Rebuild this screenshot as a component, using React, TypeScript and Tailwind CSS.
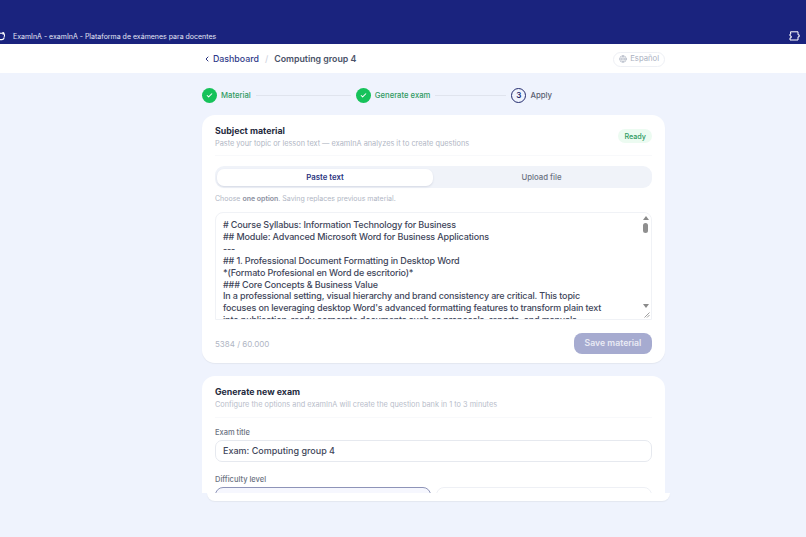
import { ChevronLeft, Check, Globe } from 'lucide-react'

const LINES = [
  '# Course Syllabus: Information Technology for Business',
  '## Module: Advanced Microsoft Word for Business Applications',
  '---',
  '## 1. Professional Document Formatting in Desktop Word',
  '*(Formato Profesional en Word de escritorio)*',
  '### Core Concepts & Business Value',
  'In a professional setting, visual hierarchy and brand consistency are critical. This topic',
  "focuses on leveraging desktop Word's advanced formatting features to transform plain text",
  'into publication-ready corporate documents such as proposals, reports, and manuals.',
]

function DoneStep({ label }: { label: string }) {
  return (
    <div className="flex items-center gap-[4px]">
      <span className="flex h-[15px] w-[15px] items-center justify-center rounded-full bg-[#16c25a]">
        <Check size={7} strokeWidth={3.5} className="text-white" />
      </span>
      <span className="pt-[1px] text-[7.7px] font-medium text-[#2f9a62]">{label}</span>
    </div>
  )
}

export default function App() {
  return (
    <div className="flex h-[537px] w-[806px] flex-col overflow-hidden bg-[#eff3fd] font-['Inter',sans-serif]">
      {/* Browser title bar */}
      <div className="flex h-[44px] items-end justify-between bg-[#1a237e] pb-[2px] text-white">
        <div className="flex items-center gap-[8px]">
          <svg width="5" height="9" viewBox="0 0 5 9" fill="none" stroke="white" strokeWidth="1.1">
            <path d="M0 1.2h2.4a2.2 2.2 0 0 1 1.6 3.6M0 7.6h2a2.4 2.4 0 0 0 2.2-2.2M2.6 0l1.4 1.2-1.4 1.2" />
          </svg>
          <span className="text-[7px] text-[#e4e6f5]">ExamInA - examInA - Plataforma de exámenes para docentes</span>
        </div>
        <svg width="11" height="10" viewBox="0 0 11 10" fill="none" stroke="white" strokeWidth="1" className="mr-[6px] mb-[1px]">
          <path d="M1.5 0.8h7.5v3h1.2v2H9V9H1V6.8h1.2V5H1V3h0.8z" />
        </svg>
      </div>

      {/* Breadcrumb */}
      <div className="flex h-[29px] bg-white pl-[202px]">
        <div className="flex w-[463px] items-center justify-between pt-[1px]">
          <div className="flex items-center text-[8.8px] font-medium">
            <ChevronLeft size={8} strokeWidth={3} className="ml-[1px] mr-[2px] text-[#2b3480]" />
            <span className="text-[#2f3a8a]">Dashboard</span>
            <span className="mx-[6px] text-[#cfd4e0]">/</span>
            <span className="font-semibold text-[#4a5268]">Computing group 4</span>
          </div>
          <div className="flex h-[15px] items-center gap-[3px] rounded-full border border-[#eef0f5] px-[5px] text-[7.7px] text-[#a9b0bf]">
            <Globe size={8} />
            Español
          </div>
        </div>
      </div>

      <div className="flex flex-1 flex-col pl-[202px]">
        {/* Stepper */}
        <div className="flex h-[42px] w-[463px] items-center pt-[2px]">
          <DoneStep label="Material" />
          <div className="mx-[5px] h-px w-[95px] bg-[#e0e4ee]" />
          <DoneStep label="Generate exam" />
          <div className="mx-[5px] h-px w-[71px] bg-[#e0e4ee]" />
          <div className="flex items-center gap-[4px]">
            <span className="flex h-[15px] w-[15px] items-center justify-center rounded-full border border-[#232b6e] text-[8px] font-semibold text-[#232b6e]">3</span>
            <span className="pt-[1px] text-[7.8px] font-medium text-[#5a6172]">Apply</span>
          </div>
        </div>

        {/* Subject material */}
        <div className="h-[248px] w-[463px] rounded-[13px] bg-white px-[13px] shadow-[0_1px_1px_#e3e7f0]">
          <div className="flex items-start justify-between border-b border-[#f8f9fb] pt-[9px] pb-[6px]">
            <div>
              <h2 className="text-[8.8px] leading-[13px] font-bold text-[#252b40]">Subject material</h2>
              <p className="mt-[1px] text-[7.35px] leading-[11px] text-[#b0b6c4]">Paste your topic or lesson text — examInA analyzes it to create questions</p>
            </div>
            <span className="mt-[5px] rounded-full bg-[#ecfbf1] px-[6px] py-[2.5px] text-[7.2px] leading-[9px] font-medium text-[#2f9a62]">Ready</span>
          </div>
          <div className="mt-[10px] flex h-[22px] items-center rounded-[9px] bg-[#f0f3f9] p-[2px] text-[7.8px] font-semibold">
            <div className="flex h-[17px] w-[216px] items-center justify-center rounded-[7px] bg-white pt-[1px] text-[#2b3480] shadow-[0_1px_2px_#d5d9e4]">Paste text</div>
            <div className="flex-1 pt-[1px] text-center font-medium text-[#6b7282]">Upload file</div>
          </div>
          <p className="mt-[6px] text-[7px] leading-[10px] text-[#b0b6c4]">
            Choose <b className="font-semibold text-[#8a90a0]">one option</b>. Saving replaces previous material.
          </p>
          <div className="relative mt-[8px] h-[108px] overflow-hidden rounded-t-[8px] border border-[#f0f2f6] pt-[6px] pl-[7px]">
            <div className="text-[9px] leading-[11.9px] font-medium tracking-[-0.15px] whitespace-pre text-[#41465a]">
              {LINES.map((line) => (
                <div key={line}>{line}</div>
              ))}
            </div>
            {/* Scrollbar */}
            <div className="absolute top-0 right-0 flex h-full w-[11px] flex-col items-center bg-white pt-[3px]">
              <span className="h-0 w-0 border-x-[3.5px] border-b-[4px] border-x-transparent border-b-[#8a8a8a]" />
              <span className="mt-[3px] h-[10px] w-[5px] rounded-full bg-[#8f8f8f]" />
              <span className="mt-auto mb-[11px] h-0 w-0 border-x-[3.5px] border-t-[4px] border-x-transparent border-t-[#8a8a8a]" />
            </div>
            <svg width="6" height="6" viewBox="0 0 6 6" stroke="#777" strokeWidth="0.7" className="absolute right-[1px] bottom-[1px]">
              <path d="M0.5 5.5 5.5 0.5M3 5.5 5.5 3" />
            </svg>
          </div>
          <div className="mt-[13px] flex items-center justify-between">
            <span className="text-[8px] text-[#b0b6c4]">5384 / 60.000</span>
            <button className="h-[21px] w-[78px] rounded-[8px] bg-[#a6abd0] text-[8.7px] font-semibold text-[#e9eaf4]">Save material</button>
          </div>
        </div>

        {/* Generate new exam: the window cuts it off, with a shifted strip below */}
        <div className="mt-[13px] h-[117px] w-[463px] overflow-hidden rounded-t-[13px] bg-white px-[13px]">
          <div className="border-b border-[#f8f9fb] pt-[9px] pb-[7px]">
            <h2 className="text-[8.8px] leading-[13px] font-bold text-[#252b40]">Generate new exam</h2>
            <p className="mt-[1px] text-[7.35px] leading-[11px] text-[#b8bdca]">Configure the options and examInA will create the question bank in 1 to 3 minutes</p>
          </div>
          <label className="mt-[9px] block text-[7.5px] leading-[11px] font-medium text-[#6b7282]">Exam title</label>
          <div className="mt-[2px] flex h-[22px] items-center rounded-[7px] border border-[#e6e9ef] px-[7px] text-[9px] font-medium text-[#41465a]">Exam: Computing group 4</div>
          <label className="mt-[12px] block text-[7.5px] leading-[11px] font-medium text-[#6b7282]">Difficulty level</label>
          <div className="mt-[2px] flex gap-[5px]">
            <div className="h-[20px] flex-1 rounded-[8px] border border-[#8e94b8] bg-[#f6f7fe]" />
            <div className="h-[20px] flex-1 rounded-[8px] border border-[#eef0f5]" />
          </div>
        </div>
        <div className="ml-[5px] h-[8px] w-[463px] rounded-b-[10px] bg-white shadow-[0_1px_1px_#e3e7f0]" />
      </div>
    </div>
  )
}
